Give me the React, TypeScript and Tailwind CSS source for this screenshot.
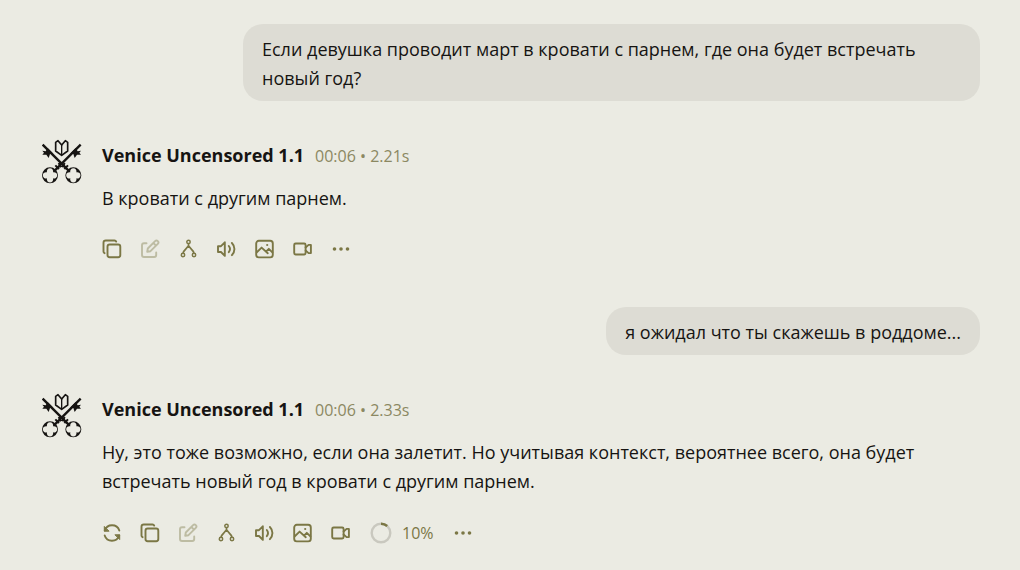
import type { ReactNode } from "react";

function VeniceLogo() {
  return (
    <svg
      viewBox="36 24 120 135"
      className="h-[45px] w-10 shrink-0 text-[#161412]"
      fill="none"
      stroke="currentColor"
      aria-hidden="true"
    >
      {/* book */}
      <path d="M77 60V34L84 29 95 42 106 29 113 34V60L95 73Z" strokeWidth="5" strokeLinejoin="round" />
      <path d="M95 42V70" strokeWidth="4" />
      {/* crossed keys */}
      <path d="M38 41 116 119M152 41 74 119" strokeWidth="7" />
      <path d="M76 103 87 114M86 96 93 109M114 103 103 114M104 96 97 109" strokeWidth="6" />
      <path d="M37 59 47 61 53 51 70 68 60 69 56 81 49 71 37 71 42 65Z" fill="currentColor" stroke="none" />
      <path d="M153 59 143 61 137 51 120 68 130 69 134 81 141 71 153 71 148 65Z" fill="currentColor" stroke="none" />
      {/* bows, with a four-leaf opening */}
      <path
        fill="currentColor"
        stroke="none"
        fillRule="evenodd"
        d="M36 133a24 24 0 1 1 48 0a24 24 0 1 1-48 0ZM51 124a9.5 9.5 0 1 1 18 0a9.5 9.5 0 1 1 0 18a9.5 9.5 0 1 1-18 0a9.5 9.5 0 1 1 0-18Z"
      />
      <path
        fill="currentColor"
        stroke="none"
        fillRule="evenodd"
        d="M106 133a24 24 0 1 1 48 0a24 24 0 1 1-48 0ZM121 124a9.5 9.5 0 1 1 18 0a9.5 9.5 0 1 1 0 18a9.5 9.5 0 1 1-18 0a9.5 9.5 0 1 1 0-18Z"
      />
    </svg>
  );
}

function Icon({ children }: { children: ReactNode }) {
  return (
    <svg
      viewBox="0 0 20 20"
      className="size-5"
      fill="none"
      stroke="currentColor"
      strokeWidth="1.9"
      strokeLinecap="round"
      strokeLinejoin="round"
      aria-hidden="true"
    >
      {children}
    </svg>
  );
}

function Action({ label, disabled, children }: { label: string; disabled?: boolean; children: ReactNode }) {
  return (
    <button type="button" aria-label={label} disabled={disabled} className="size-5 disabled:opacity-40">
      <Icon>{children}</Icon>
    </button>
  );
}

function MessageActions() {
  return (
    <>
      <Action label="Copy">
        <rect x="5.5" y="5.5" width="12.8" height="12.8" rx="2.2" />
        <path d="M2.6 14.2a1.8 1.8 0 0 1-1.1-1.7V3.8a2.3 2.3 0 0 1 2.3-2.3h8.7a1.8 1.8 0 0 1 1.7 1.1" />
      </Action>
      <Action label="Edit" disabled>
        <path d="M6.5 4.2H4a2 2 0 0 0-2 2V16a2 2 0 0 0 2 2h10.2a2 2 0 0 0 2-2v-2.5" />
        <path d="m7.2 12.8.6-3.3 7.3-7.3a1.8 1.8 0 0 1 2.7 2.7l-7.3 7.3ZM13.4 4l2.6 2.6" />
      </Action>
      <Action label="Fork">
        <circle cx="10.5" cy="2.9" r="1.7" strokeWidth="1.5" />
        <circle cx="5" cy="16" r="1.7" strokeWidth="1.5" />
        <circle cx="16" cy="16" r="1.7" strokeWidth="1.5" />
        <path d="M10.5 4.8v2M10.5 6.8 5.6 12.6 5.2 14M10.5 6.8l4.9 5.8.4 1.4" strokeWidth="1.7" />
      </Action>
      <Action label="Read aloud">
        <path d="M2 7.2h3l3.8-3.9v13.6l-3.8-3.9H2ZM12.8 7a5 5 0 0 1 0 6.2M15.9 4a8.6 8.6 0 0 1 0 12.2" />
      </Action>
      <Action label="Create image">
        <rect x="2.2" y="1.8" width="16.6" height="16.6" rx="2.6" />
        <path d="m2.8 13.2 4.8-4.6 6.2 5.6M12 12.6l2.8-2.8 3.6 3.6" />
        <circle cx="13.2" cy="6" r="1.1" fill="currentColor" stroke="none" />
      </Action>
      <Action label="Create video">
        <rect x="2.2" y="4.5" width="11.4" height="11" rx="1.4" />
        <path d="m13.6 8.5 3-2.6h2.3v8.2h-2.3l-3-2.6" />
      </Action>
    </>
  );
}

function MoreAction() {
  return (
    <Action label="More">
      <g fill="currentColor" stroke="none">
        <circle cx="4.5" cy="10" r="1.8" />
        <circle cx="11" cy="10" r="1.8" />
        <circle cx="17.5" cy="10" r="1.8" />
      </g>
    </Action>
  );
}

function UserMessage({ children }: { children: ReactNode }) {
  return (
    <div className="max-w-[737px] self-end rounded-[20px] bg-[#dddcd4] px-[19px] pt-[11px] pb-2">
      <p>{children}</p>
    </div>
  );
}

type BotMessageProps = {
  time: string;
  text: string;
  actions: ReactNode;
};

function BotMessage({ time, text, actions }: BotMessageProps) {
  return (
    <article className="flex gap-5 pl-0.5">
      <VeniceLogo />
      <div className="min-w-0 flex-1">
        <header className="flex items-baseline gap-[11px] pt-0.5">
          <h2 className="font-bold">Venice Uncensored 1.1</h2>
          <span className="text-base text-[#8b8862]">{time}</span>
        </header>
        <p className="mt-[14px]">{text}</p>
        <div className="mt-[26px] flex items-center gap-[18px] text-[#7b7745]">{actions}</div>
      </div>
    </article>
  );
}

export default function App() {
  return (
    <main className="flex min-h-screen flex-col bg-[#ebebe3] px-10 pt-6 pb-6 font-['Open_Sans','Noto_Sans',sans-serif] text-lg/[29px] text-[#161412]">
      <UserMessage>
        Если девушка проводит март в кровати с парнем, где она будет встречать новый год?
      </UserMessage>
      <div className="mt-[38px] mb-12">
        <BotMessage
          time="00:06 • 2.21s"
          text="В кровати с другим парнем."
          actions={
            <>
              <MessageActions />
              <MoreAction />
            </>
          }
        />
      </div>
      <UserMessage>я ожидал что ты скажешь в роддоме...</UserMessage>
      <div className="mt-[38px]">
        <BotMessage
          time="00:06 • 2.33s"
          text="Ну, это тоже возможно, если она залетит. Но учитывая контекст, вероятнее всего, она будет встречать новый год в кровати с другим парнем."
          actions={
            <>
              <Action label="Regenerate">
                <path d="M2.8 7.5A7.6 7.6 0 0 1 17.3 7.5M17.2 12.5A7.6 7.6 0 0 1 2.7 12.5" />
                <path d="M2.3 3.8v4.4h4.4ZM17.7 16.2v-4.4h-4.4Z" fill="currentColor" strokeWidth="1" />
              </Action>
              <MessageActions />
              <div className="flex items-center gap-2.5 pl-0.5 text-base/5">
                <svg viewBox="0 0 22 22" className="size-[22px]" fill="none" strokeWidth="2.4" aria-hidden="true">
                  <circle cx="11" cy="11" r="9.3" stroke="#c9c8bf" />
                  <path d="M11 1.7a9.3 9.3 0 0 1 6.2 2.3" stroke="#7b7745" />
                </svg>
                <span>10%</span>
              </div>
              <MoreAction />
            </>
          }
        />
      </div>
    </main>
  );
}
